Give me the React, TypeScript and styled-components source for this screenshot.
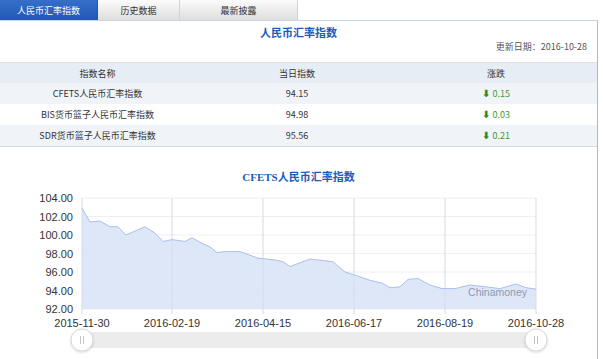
import styled, { createGlobalStyle } from "styled-components";

const GlobalStyle = createGlobalStyle`
  body {
    margin: 0;
    background: #fff;
    font-family: "Noto Sans CJK SC", "Liberation Sans", sans-serif;
  }
`;

const tabs = ["人民币汇率指数", "历史数据", "最新披露"];
const tabWidths = [98, 82, 118];

const rows = [
  { name: "CFETS人民币汇率指数", value: "94.15", change: "0.15" },
  { name: "BIS货币篮子人民币汇率指数", value: "94.98", change: "0.03" },
  { name: "SDR货币篮子人民币汇率指数", value: "95.56", change: "0.21" },
];

// [x on page, index value]
const series: [number, number][] = [
  [82, 102.9], [90, 101.4], [100, 101.5], [110, 100.9], [118, 100.9],
  [126, 100.0], [145, 100.9], [155, 100.2], [163, 99.3], [172, 99.5],
  [185, 99.3], [192, 99.7], [202, 99.1], [210, 98.7], [217, 98.1],
  [225, 98.2], [240, 98.2], [258, 97.5], [275, 97.3], [283, 97.1],
  [290, 96.6], [300, 97.0], [310, 97.4], [333, 97.1], [345, 96.0],
  [354, 95.7], [370, 95.1], [382, 94.8], [390, 94.3], [400, 94.4],
  [408, 95.2], [418, 95.3], [430, 94.6], [442, 94.2], [455, 94.2],
  [470, 94.6], [478, 94.5], [500, 94.2], [516, 94.7], [526, 94.3],
  [536, 94.15],
];

const PLOT_LEFT = 82;
const PLOT_RIGHT = 536;
const PLOT_BOTTOM = 308;
const toY = (v: number) => PLOT_BOTTOM - (v - 92) * 9.25;

const yTicks = [104, 102, 100, 98, 96, 94, 92];
const xTicks = [
  { x: 82, label: "2015-11-30" },
  { x: 172, label: "2016-02-19" },
  { x: 263, label: "2016-04-15" },
  { x: 354, label: "2016-06-17" },
  { x: 445, label: "2016-08-19" },
  { x: 536, label: "2016-10-28" },
];

const linePath = series
  .map(([x, v], i) => `${i === 0 ? "M" : "L"}${x},${toY(v).toFixed(1)}`)
  .join(" ");
const areaPath = `${linePath} L${PLOT_RIGHT},${PLOT_BOTTOM} L${PLOT_LEFT},${PLOT_BOTTOM} Z`;

const Handle = ({ x }: { x: number }) => (
  <g>
    <circle cx={x} cy={339} r={11} fill="#fff" stroke="#d6d6d6" filter="url(#shadow)" />
    <line x1={x - 1.5} y1={335} x2={x - 1.5} y2={343} stroke="#c4c4c4" />
    <line x1={x + 1.5} y1={335} x2={x + 1.5} y2={343} stroke="#c4c4c4" />
  </g>
);

export default function App() {
  return (
    <Page>
      <GlobalStyle />
      <TabBar>
        {tabs.map((t, i) => (
          <Tab key={t} $active={i === 0} $width={tabWidths[i]}>
            {t}
          </Tab>
        ))}
      </TabBar>
      <Panel>
        <Title>人民币汇率指数</Title>
        <UpdateDate>更新日期：2016-10-28</UpdateDate>
        <Table>
          <HeaderRow>
            <Cell>指数名称</Cell>
            <Cell>当日指数</Cell>
            <Cell>涨跌</Cell>
          </HeaderRow>
          {rows.map((r, i) => (
            <Row key={r.name} $striped={i % 2 === 0}>
              <Cell>{r.name}</Cell>
              <Cell>{r.value}</Cell>
              <Change>
                <Arrow>⬇</Arrow> {r.change}
              </Change>
            </Row>
          ))}
        </Table>
        <ChartTitle>CFETS人民币汇率指数</ChartTitle>
        <ChartSvg width={597} height={170} viewBox="0 184 597 170">
          <defs>
            <filter id="shadow" x="-50%" y="-50%" width="200%" height="200%">
              <feDropShadow dx="0" dy="1" stdDeviation="1.2" floodColor="#000" floodOpacity="0.18" />
            </filter>
          </defs>
          {yTicks.map((v) => (
            <line key={v} x1={PLOT_LEFT} x2={PLOT_RIGHT} y1={toY(v)} y2={toY(v)} stroke="#efefef" />
          ))}
          {xTicks.map((t) => (
            <line key={t.x} x1={t.x} x2={t.x} y1={197} y2={313} stroke="#ededed" />
          ))}
          <path d={areaPath} fill="#dbe5f7" fillOpacity={0.92} />
          {xTicks.map((t) => (
            <line key={t.x} x1={t.x} x2={t.x} y1={toY(104)} y2={313} stroke="#c9d6ec" strokeOpacity={0.55} />
          ))}
          <path d={linePath} fill="none" stroke="#a9c1ea" strokeWidth={1} />
          {yTicks.map((v) => (
            <AxisText key={v} x={73} y={toY(v) + 4} textAnchor="end">
              {v.toFixed(2)}
            </AxisText>
          ))}
          {xTicks.map((t) => (
            <AxisText key={t.label} x={t.x} y={326} textAnchor="middle">
              {t.label}
            </AxisText>
          ))}
          <Watermark x={527} y={295} textAnchor="end">
            Chinamoney
          </Watermark>
          <rect x={82} y={331} width={454} height={16} fill="#ececec" />
          <Handle x={82} />
          <Handle x={536} />
        </ChartSvg>
      </Panel>
    </Page>
  );
}

const Page = styled.div`
  width: 603px;
  height: 359px;
  overflow: hidden;
`;

const TabBar = styled.div`
  display: flex;
  height: 20px;
`;

const Tab = styled.div<{ $active: boolean; $width: number }>`
  width: ${(p) => p.$width}px;
  box-sizing: border-box;
  text-align: center;
  line-height: 21px;
  font-size: 9px;
  color: ${(p) => (p.$active ? "#fff" : "#333")};
  background: ${(p) =>
    p.$active
      ? "linear-gradient(#356fca, #2258b4)"
      : "linear-gradient(#fbfbfb, #dedede)"};
  border-right: 1px solid ${(p) => (p.$active ? "#2258b4" : "#d2d2d2")};
`;

const Panel = styled.div`
  width: 598px;
  height: 339px;
  box-sizing: border-box;
  border-top: 1px solid #c9d5e4;
  border-right: 1px solid #a7bbd6;
  display: flex;
  flex-direction: column;
`;

const Title = styled.div`
  margin-top: 4px;
  height: 15px;
  line-height: 15px;
  text-align: center;
  font-size: 11px;
  font-weight: bold;
  color: #1c5cb6;
`;

const UpdateDate = styled.div`
  height: 14px;
  line-height: 14px;
  padding-right: 10px;
  text-align: right;
  font-size: 9px;
  color: #555;
  margin-bottom: 8px;
`;

const Table = styled.div`
  display: flex;
  flex-direction: column;
  border-top: 1px solid #d8e0ea;
  border-bottom: 1px solid #d5d9de;
`;

const HeaderRow = styled.div`
  display: grid;
  grid-template-columns: 195px 204px 194px;
  height: 20px;
  align-items: center;
  background: #e7edf4;
  font-size: 9px;
  color: #333;
`;

const Row = styled.div<{ $striped: boolean }>`
  display: grid;
  grid-template-columns: 195px 204px 194px;
  height: 21px;
  align-items: center;
  background: ${(p) => (p.$striped ? "#f0f4f9" : "#fff")};
  font-size: 9px;
  color: #333;
`;

const Cell = styled.div`
  text-align: center;
`;

const Change = styled.div`
  text-align: center;
  color: #3f9a32;
`;

const Arrow = styled.span`
  color: #2e8a22;
  font-family: "DejaVu Sans", sans-serif;
  font-size: 10px;
  font-weight: bold;
`;

const ChartTitle = styled.div`
  margin-top: 22px;
  height: 16px;
  line-height: 16px;
  text-align: center;
  font-family: "Liberation Serif", "Noto Sans CJK SC", serif;
  font-size: 11px;
  font-weight: bold;
  color: #1c5cb6;
`;

const ChartSvg = styled.svg`
  display: block;
`;

const AxisText = styled.text`
  font-family: "Liberation Sans", Arial, sans-serif;
  font-size: 11px;
  fill: #333;
`;

const Watermark = styled.text`
  font-family: "Liberation Sans", Arial, sans-serif;
  font-size: 10.5px;
  fill: #8a9ab3;
`;
